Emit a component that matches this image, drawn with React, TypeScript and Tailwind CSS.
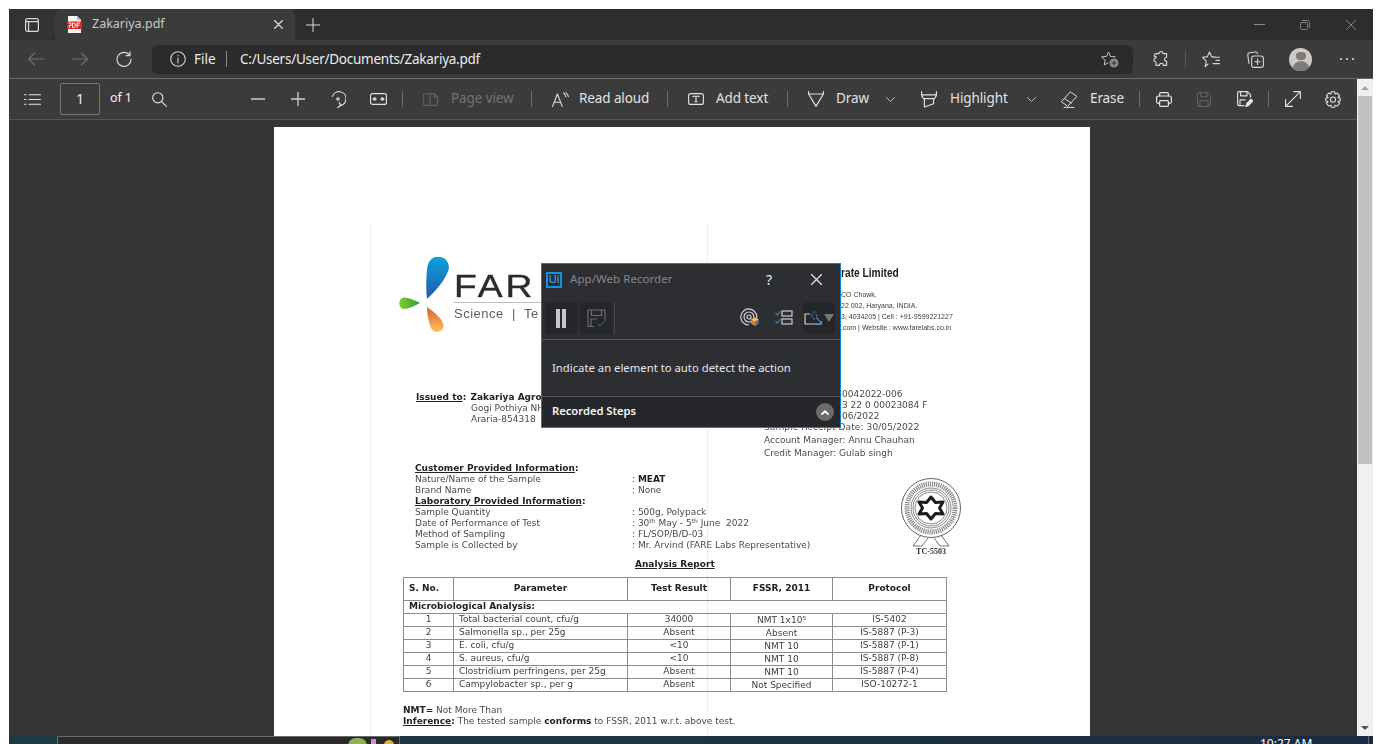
import React from "react";

function I({ w, h, className = "", sw = 1.2, children }: { w: number; h: number; className?: string; sw?: number; children: React.ReactNode }) {
  return (
    <svg width={w} height={h} viewBox={`0 0 ${w} ${h}`} fill="none" stroke="currentColor" strokeWidth={sw} strokeLinecap="round" strokeLinejoin="round" className={`shrink-0 ${className}`}>
      {children}
    </svg>
  );
}

function Sep({ className = "" }: { className?: string }) {
  return <div className={`w-px h-[16px] bg-[#6e6e6e] shrink-0 ${className}`} />;
}

function Chevron({ className = "" }: { className?: string }) {
  return (
    <I w={9} h={5} className={`text-[#bdbdbd] ${className}`} sw={1}>
      <path d="M0.5 0.5L4.5 4.5L8.5 0.5" />
    </I>
  );
}

function TabBar() {
  return (
    <div className="h-[31px] bg-[#2d2d2d] flex items-stretch text-[#d8d8d8]">
      <div className="w-[46px] bg-[#333333] rounded-br-md flex items-center pl-[16px]">
        <I w={14} h={14}>
          <rect x="0.6" y="0.6" width="12.8" height="12.8" rx="2" />
          <path d="M0.6 3.6H13.4M3.6 3.6V13.4" />
        </I>
      </div>
      <div className="w-[240px] bg-[#3b3b3b] rounded-t-md flex items-center">
        <svg width="15" height="17" viewBox="0 0 15 17" className="ml-[12px] shrink-0">
          <path d="M1 0H10L14 4V17H1Z" fill="#f4f4f4" />
          <path d="M10 0V4H14Z" fill="#bbbbbb" />
          <rect x="0" y="5.5" width="15" height="7.5" fill="#e2231a" />
          <path d="M1.5 7H4V9.6H2.3V11.6M5.5 7V11.6H7.2L8.2 10.5V8L7.2 7H5.5ZM10 11.6V7H13M10 9.2H12.4" fill="none" stroke="#fff" strokeWidth="1" />
        </svg>
        <span className="ml-[10px] text-[12.5px] text-[#c8c8c8] w-[182px] whitespace-nowrap">Zakariya.pdf</span>
        <I w={9} h={9} sw={1.3}>
          <path d="M0.5 0.5L8.5 8.5M8.5 0.5L0.5 8.5" />
        </I>
      </div>
      <div className="flex items-center ml-[11px]">
        <I w={14} h={14} sw={1}>
          <path d="M7 0V14M0 7H14" />
        </I>
      </div>
      <div className="flex-1" />
      <div className="flex items-center text-[#8a8a8a]">
        <I w={11} h={1} sw={1}>
          <path d="M0 0.5H11" />
        </I>
        <I w={10} h={10} sw={0.9} className="ml-[35px]">
          <rect x="0.5" y="2.5" width="7" height="7" rx="1.2" />
          <path d="M2.5 0.5H7.5A2 2 0 0 1 9.5 2.5V7.5" />
        </I>
        <I w={10} h={10} sw={0.9} className="ml-[36px] mr-[17px]">
          <path d="M0 0L10 10M10 0L0 10" />
        </I>
      </div>
    </div>
  );
}

function AddressRow() {
  return (
    <div className="h-[39px] bg-[#3b3b3b] border-b border-[#6b6b6b] flex items-center text-[#d6d6d6]">
      <I w={16} h={14} className="ml-[19px] text-[#6f6f6f]" sw={1.1}>
        <path d="M0.6 7H15.6M6.6 1L0.6 7L6.6 13" />
      </I>
      <I w={16} h={14} className="ml-[28px] text-[#6f6f6f]" sw={1.1}>
        <path d="M0.4 7H15.4M9.4 1L15.4 7L9.4 13" />
      </I>
      <I w={16} h={16} className="ml-[28px]" sw={1.2}>
        <path d="M13.6 4.2A7 7 0 1 0 15 8" />
        <path d="M14 0.8V4.7H10.1" />
      </I>
      <div className="ml-[20px] w-[981px] h-[29px] bg-[#2b2b2b] rounded-md flex items-center">
        <I w={16} h={16} className="ml-[18px]" sw={1.1}>
          <circle cx="8" cy="8" r="7.3" />
          <path d="M8 7V12M8 4.3V4.8" />
        </I>
        <span className="ml-[8px] text-[13.5px] text-[#ececec] w-[24px]">File</span>
        <div className="ml-[8px] w-px h-[16px] bg-[#8a8a8a]" />
        <span className="ml-[13px] text-[13.5px] text-[#ececec] whitespace-nowrap tracking-[-0.25px]">C:/Users/User/Documents/Zakariya.pdf</span>
        <div className="flex-1" />
        <svg width="18" height="17" viewBox="0 0 18 17" className="mr-[14px] text-[#c4c4c4]" fill="none" stroke="currentColor" strokeWidth="1" strokeLinejoin="round">
          <path d="M7.5 1L9.5 5.4L14.4 5.9L10.8 9.2L11.8 14L7.5 11.6L3.2 14L4.2 9.2L0.6 5.9L5.5 5.4Z" />
          <circle cx="13" cy="12" r="5" fill="#8c8c8c" stroke="#2b2b2b" />
          <path d="M13 9.6V14.4M10.6 12H15.4" stroke="#2b2b2b" />
        </svg>
      </div>
      <svg width="16" height="16" viewBox="0 0 16 16" className="ml-[20px]" fill="none" stroke="currentColor" strokeWidth="1.15" strokeLinejoin="round">
        <path d="M6 2.6A2 2 0 0 1 10 2.6H13.6V6.2A2 2 0 0 0 13.6 10.2V14.4H10.4A2 2 0 0 0 6.4 14.4H3V11A2 2 0 0 1 3 7V5.6L1.6 5.6A2 2 0 0 1 3 2.6Z" />
      </svg>
      <div className="ml-[16px] w-px h-[16px] bg-[#5c5c5c]" />
      <I w={18} h={17} className="ml-[16px]" sw={1.1}>
        <path d="M7.5 1L9.6 5.6L14.6 6.2M14 9.4H17.4M11 12.6H17.4M11 6.2H17.4M6 13L3.2 15.6L4.2 10.2L0.6 6.4L5.4 5.6L7.5 1" />
      </I>
      <I w={17} h={17} className="ml-[27px]" sw={1.1}>
        <path d="M2 12.5L0.8 4.2A2 2 0 0 1 2.6 1.8L8.4 1A2 2 0 0 1 10.6 2.6" />
        <rect x="4.6" y="5" width="11.8" height="11.4" rx="2.4" />
        <path d="M10.5 8V13.4M7.8 10.7H13.2" />
      </I>
      <div className="ml-[25px] w-[23px] h-[23px] rounded-full bg-[#cfcac6] overflow-hidden flex flex-col items-center">
        <div className="w-[10px] h-[10px] mt-[4px] rounded-full bg-[#7f7b78]" />
        <div className="w-[18px] h-[12px] mt-[1px] rounded-t-full bg-[#7f7b78]" />
      </div>
      <div className="ml-[28px] flex gap-[3px]">
        <div className="w-[2px] h-[2px] rounded-full bg-[#e4e4e4]" />
        <div className="w-[2px] h-[2px] rounded-full bg-[#e4e4e4] ml-[1px]" />
        <div className="w-[2px] h-[2px] rounded-full bg-[#e4e4e4] ml-[1px]" />
      </div>
    </div>
  );
}

function PdfToolbar() {
  const t = "mb-[1px]";
  return (
    <div className="h-[41px] bg-[#3b3b3b] border-b border-[#555555] flex items-center text-[#e2e2e2] text-[13.5px] tracking-[-0.1px] whitespace-nowrap">
      <I w={17} h={11} className="ml-[15px]" sw={1.1}>
        <path d="M0.5 0.8H2M5 0.8H16.5M0.5 5.5H2M5 5.5H16.5M0.5 10.2H2M5 10.2H16.5" />
      </I>
      <div className="ml-[19px] w-[40px] h-[32px] border border-[#767676] rounded-[2px] flex items-center justify-center text-[#f0f0f0]">1</div>
      <span className={`ml-[10px] w-[21px] text-[#f0f0f0] text-[12.5px] ${t}`}>of 1</span>
      <I w={15} h={15} className="ml-[21px]" sw={1.1}>
        <circle cx="5.8" cy="5.8" r="5.1" />
        <path d="M9.6 9.6L14.4 14.4" />
      </I>
      <I w={14} h={2} className="ml-[84px] text-[#cfcfcf]" sw={1.3}>
        <path d="M0 1H14" />
      </I>
      <I w={14} h={14} className="ml-[26px] text-[#cfcfcf]" sw={1.3}>
        <path d="M7 0V14M0 7H14" />
      </I>
      <I w={16} h={17} className="ml-[25px]" sw={1.15}>
        <path d="M2.4 5.4A7 7 0 1 1 10 14.6" />
        <path d="M7.6 16.4L10.8 14.6L9.2 11.6" />
        <circle cx="8" cy="8" r="1.2" />
      </I>
      <I w={17} h={12} className="ml-[24px]" sw={1.15}>
        <rect x="0.6" y="0.6" width="15.8" height="10.8" rx="2" />
        <path d="M3.5 6H6.5M10.5 6H13.5" />
        <path d="M3 6L5 4.6V7.4ZM14 6L12 4.6V7.4Z" fill="currentColor" />
      </I>
      <Sep className="ml-[15px]" />
      <I w={15} h={13} className="ml-[20px] text-[#646464]" sw={1.1}>
        <path d="M5 0.6H2A1.4 1.4 0 0 0 0.6 2V11A1.4 1.4 0 0 0 2 12.4H5" strokeDasharray="2 1.4" />
        <path d="M7 0.6H11L14.4 4V11A1.4 1.4 0 0 1 13 12.4H7ZM11 0.6V4H14.4" />
      </I>
      <span className={`ml-[13px] w-[61px] text-[#727272] ${t}`}>Page view</span>
      <Sep className="ml-[19px]" />
      <I w={17} h={15} className="ml-[20px]" sw={1.1}>
        <path d="M0.6 14.4L5.4 2L10.2 14.4M2.2 10.2H8.6" />
        <path d="M11.4 1C12.8 1.8 13.6 3 13.8 4.6M13.8 0.6C15.4 1.6 16.2 3 16.4 4.8" />
      </I>
      <span className={`ml-[10px] w-[70px] ${t}`}>Read aloud</span>
      <Sep className="ml-[18px]" />
      <I w={16} h={12} className="ml-[20px]" sw={1.1}>
        <rect x="0.6" y="0.6" width="14.8" height="10.8" rx="2" />
        <path d="M5 3.6V3.2H11V3.6M8 3.2V8.8M6.8 8.8H9.2" />
      </I>
      <span className={`ml-[12px] w-[53px] ${t}`}>Add text</span>
      <Sep className="ml-[18px]" />
      <I w={16} h={17} className="ml-[20px]" sw={1.15}>
        <path d="M0.6 0.6V3M15.4 0.6V3M0.6 3H15.4L8 15.4Z" />
      </I>
      <span className={`ml-[12px] w-[32px] ${t}`}>Draw</span>
      <Chevron className="ml-[18px]" />
      <I w={16} h={17} className="ml-[26px]" sw={1.15}>
        <path d="M0.6 0.6V4.6L2.6 7.6H13.4L15.4 4.6V0.6M0.6 3.8H15.4M3.4 7.6V16L12.6 12.8V7.6" />
      </I>
      <span className={`ml-[13px] w-[57px] ${t}`}>Highlight</span>
      <Chevron className="ml-[20px]" />
      <I w={17} h={17} className="ml-[25px]" sw={1}>
        <path d="M0.6 10.4L9.4 0.8L15.8 5.4L7 15Z" />
        <path d="M3.4 7.4L10.2 12.2" />
        <path d="M3 16.4H13" />
      </I>
      <span className={`ml-[12px] w-[31px] ${t}`}>Erase</span>
      <Sep className="ml-[18px]" />
      <I w={16} h={15} className="ml-[16px]" sw={1.2}>
        <path d="M3.6 4V2A1.4 1.4 0 0 1 5 0.6H11A1.4 1.4 0 0 1 12.4 2V4" />
        <path d="M3.6 11.4H2.4A1.8 1.8 0 0 1 0.6 9.6V5.8A1.8 1.8 0 0 1 2.4 4H13.6A1.8 1.8 0 0 1 15.4 5.8V9.6A1.8 1.8 0 0 1 13.6 11.4H12.4" />
        <rect x="3.6" y="8.6" width="8.8" height="5.8" rx="1.2" />
      </I>
      <I w={14} h={15} className="ml-[25px] text-[#676767]" sw={1}>
        <path d="M0.6 2A1.4 1.4 0 0 1 2 0.6H10.4L13.4 3.6V13A1.4 1.4 0 0 1 12 14.4H2A1.4 1.4 0 0 1 0.6 13Z" />
        <path d="M3.6 0.6V4.8H10V0.6M3 14.4V8.8H11V14.4" />
      </I>
      <svg width="16" height="16" viewBox="0 0 16 16" className="ml-[26px]" fill="none" stroke="currentColor" strokeWidth="1.15" strokeLinejoin="round">
        <path d="M7.6 14.6H2A1.4 1.4 0 0 1 0.6 13.2V2A1.4 1.4 0 0 1 2 0.6H10.4L13.4 3.6V6.4" />
        <path d="M3.6 0.6V4.8H10V0.6M3 14.4V8.8H8.6" />
        <path d="M9 15.6L9.8 12.4L14 8.2L15.8 10L11.6 14.4Z" fill="currentColor" />
      </svg>
      <Sep className="ml-[15px]" />
      <I w={16} h={16} className="ml-[16px]" sw={1.1}>
        <path d="M0.6 15.4L15.4 0.6M8.6 0.6H15.4V7.4M0.6 8.6V15.4H7.4" />
      </I>
      <svg width="16" height="17" viewBox="0 0 16 17" className="ml-[24px]" fill="none" stroke="currentColor" strokeWidth="1.1" strokeLinejoin="round">
        <path d="M6.4 0.8H9.6L10.1 3L12.3 2.1L14.6 4.9L12.9 6.6L15.2 7.2V10L13 10.6L14.6 12.3L12.3 15L10.1 14.2L9.6 16.2H6.4L5.9 14.2L3.7 15L1.4 12.3L3 10.6L0.8 10V7.2L3.1 6.6L1.4 4.9L3.7 2.1L5.9 3Z" />
        <circle cx="8" cy="8.6" r="2.6" />
      </svg>
    </div>
  );
}

function Scrollbar() {
  return (
    <div className="w-[16px] bg-[#f0f0f0] flex flex-col items-center">
      <div className="h-[17px] flex items-center justify-center">
        <div className="w-0 h-0 border-x-[4px] border-x-transparent border-b-[4px] border-b-[#a3a3a3]" />
      </div>
      <div className="w-[14px] h-[368px] bg-[#c1c1c1]" />
      <div className="flex-1" />
      <div className="h-[17px] flex items-center justify-center">
        <div className="w-0 h-0 border-x-[4px] border-x-transparent border-t-[4px] border-t-[#505050]" />
      </div>
    </div>
  );
}

function Logo() {
  return (
    <svg width="52" height="76" viewBox="0 0 52 76" className="shrink-0">
      <defs>
        <linearGradient id="lb" x1="0" y1="0" x2="0" y2="1">
          <stop offset="0" stopColor="#07a5dc" />
          <stop offset="1" stopColor="#2a55a8" />
        </linearGradient>
        <linearGradient id="lg" x1="0" y1="0" x2="1" y2="0">
          <stop offset="0" stopColor="#7fd12f" />
          <stop offset="1" stopColor="#2f9a3c" />
        </linearGradient>
        <linearGradient id="lo" x1="0" y1="0" x2="0" y2="1">
          <stop offset="0" stopColor="#d9602c" />
          <stop offset="1" stopColor="#fcc45a" />
        </linearGradient>
      </defs>
      <path d="M29 42C27.5 30 28.5 16 29.5 9A10.8 10.8 0 0 1 51 10C50 20 37 35 29 42Z" fill="url(#lb)" />
      <path d="M22 46C17 48.5 11 52 5.5 52A6 6 0 0 1 5.5 40.5C11 40.5 17 43.5 22 46Z" fill="url(#lg)" />
      <path d="M29 50C36 55 45 62 45.5 68.5A6.5 6.5 0 0 1 33 71C30 64 29 56 29 50Z" fill="url(#lo)" />
    </svg>
  );
}

function Seal() {
  return (
    <div className="ml-[485px] mt-[15px] w-[62px] shrink-0 flex flex-col items-center">
      <svg width="62" height="69" viewBox="0 0 62 69" fill="none" stroke="#3a3a3a" className="shrink-0">
        <path d="M21 57L13 68H22L28 60M41 57L49 68H40L34 60" strokeWidth="0.7" />
        <circle cx="31" cy="30" r="29.5" strokeWidth="0.8" fill="#fff" />
        <circle cx="31" cy="30" r="24" strokeWidth="5" strokeDasharray="1.2 0.9" stroke="#8a8a8a" />
        <circle cx="31" cy="30" r="20" strokeWidth="0.6" />
        <circle cx="31" cy="30" r="18" strokeWidth="0.6" />
        <circle cx="31" cy="30" r="16" strokeWidth="0.6" />
        <path d="M31 19L35.5 24.5L43 24L39.5 30L43 36L35.5 35.5L31 41L26.5 35.5L19 36L22.5 30L19 24L26.5 24.5Z" stroke="#1c1c1c" strokeWidth="3" strokeLinejoin="round" />
      </svg>
      <span className="font-['Liberation_Serif',serif] font-bold text-[8px] leading-[9px] text-[#333] whitespace-nowrap">TC-5503</span>
    </div>
  );
}

const rows = [
  ["1", "Total bacterial count, cfu/g", "34000", "NMT 1x10⁵", "IS-5402"],
  ["2", "Salmonella sp., per 25g", "Absent", "Absent", "IS-5887 (P-3)"],
  ["3", "E. coli, cfu/g", "<10", "NMT 10", "IS-5887 (P-1)"],
  ["4", "S. aureus, cfu/g", "<10", "NMT 10", "IS-5887 (P-8)"],
  ["5", "Clostridium perfringens, per 25g", "Absent", "NMT 10", "IS-5887 (P-4)"],
  ["6", "Campylobacter sp., per g", "Absent", "Not Specified", "ISO-10272-1"],
];

function ReportTable() {
  const cell = "border border-[#8c8c8c] p-0 pb-px";
  const low = "border border-[#8c8c8c] p-0 pt-px";
  return (
    <table className="ml-[129px] mt-[7px] w-[543px] table-fixed border-collapse text-[#3f3f3f] leading-[11px]">
      <colgroup>
        <col className="w-[50px]" />
        <col className="w-[174px]" />
        <col className="w-[103px]" />
        <col className="w-[102px]" />
        <col className="w-[114px]" />
      </colgroup>
      <tbody>
        <tr className="h-[23px] font-bold text-center text-[#222]">
          <td className={`${cell} text-left pl-[5px]`}>S. No.</td>
          <td className={cell}>Parameter</td>
          <td className={cell}>Test Result</td>
          <td className={cell}>FSSR, 2011</td>
          <td className={cell}>Protocol</td>
        </tr>
        <tr className="h-[13px] font-bold text-[#222]">
          <td colSpan={5} className={`${cell} pl-[5px]`}>Microbiological Analysis:</td>
        </tr>
        {rows.map((r) => (
          <tr key={r[0]} className="h-[13px] text-center">
            <td className={cell}>{r[0]}</td>
            <td className={`${cell} text-left pl-[5px]`}>{r[1]}</td>
            <td className={cell}>{r[2]}</td>
            <td className={low}>{r[3]}</td>
            <td className={cell}>{r[4]}</td>
          </tr>
        ))}
      </tbody>
    </table>
  );
}

function Page() {
  const li = "h-[11px] leading-[11px]";
  return (
    <div className="relative ml-[265px] mt-[7px] w-[816px] h-[650px] bg-white overflow-hidden font-['DejaVu_Sans',sans-serif] text-[9px] text-[#4a4a4a] blur-[0.25px]">
      <div className="absolute left-[96px] top-[95px] bottom-0 w-px bg-[#f3f3f3] mix-blend-multiply" />
      <div className="absolute left-[433px] top-[95px] bottom-0 w-px bg-[#fbeaea] mix-blend-multiply" />

      <div className="pt-[130px] pl-[124px] flex h-[265px]">
        <div className="w-[443px] flex items-start">
          <Logo />
          <div className="ml-[4px] w-[87px] overflow-hidden whitespace-nowrap font-['Liberation_Sans',sans-serif]">
            <div className="mt-[13px] text-[31px] leading-[34px] text-[#2b2b2b] border-b border-[#bdbdbd] h-[33px]">
              <span className="inline-block origin-left scale-x-[1.2] tracking-[2.5px] [-webkit-text-stroke:0.4px_#2b2b2b]">FAR</span>
            </div>
            <div className="mt-[2px] text-[13px] leading-[18px] text-[#5e5e5e] tracking-[0.5px]">Science&nbsp; | &nbsp;Te</div>
          </div>
        </div>
        <div className="font-['Liberation_Sans',sans-serif] mt-[9px] whitespace-nowrap text-[#3c3c3c]">
          <div className="text-[12px] leading-[14px] font-bold text-[#222] origin-left scale-x-[0.85]">rate Limited</div>
          <div className="mt-[9px] text-[7px] leading-[11px]">CO Chowk,</div>
          <div className="text-[7px] leading-[11px]">22 002, Haryana, INDIA.</div>
          <div className="text-[7px] leading-[11px]">3, 4034205 | Cell : +91-9599221227</div>
          <div className="text-[7px] leading-[11px]">.com | Website : www.farelabs.co.in</div>
        </div>
      </div>

      <div className="pl-[142px] flex h-[71px]">
        <div className="w-[348px]">
          <div className={li}>
            <b className="text-[#222]"><u>Issued to</u>: <span className="ml-px">Zakariya Agro</span></b>
          </div>
          <div className={`${li} pl-[55px]`}>Gogi Pothiya NH</div>
          <div className={`${li} pl-[55px]`}>Araria-854318</div>
        </div>
        <div className="-mt-[3px] whitespace-nowrap">
          <div className={`${li} pl-[78px]`}>0042022-006</div>
          <div className={`${li} pl-[78px]`}>3 22 0 00023084 F</div>
          <div className={`${li} pl-[78px]`}>06/2022</div>
          <div className={`${li} tracking-[0.1px]`}>Sample Receipt Date: 30/05/2022</div>
          <div className="h-[12px] leading-[12px] mt-[1px]">Account Manager: Annu Chauhan</div>
          <div className="h-[12px] leading-[12px] mt-[1px]">Credit Manager: Gulab singh</div>
        </div>
      </div>

      <div className="pl-[141px] flex h-[96px]">
        <div className="w-0">
          <div className="w-[450px]">
            <div className={`${li} font-bold text-[#222]`}><u>Customer Provided Information</u>:</div>
            <div className={`${li} flex`}><span className="w-[217px]">Nature/Name of the Sample</span><span>: <b className="text-[#222]">MEAT</b></span></div>
            <div className={`${li} flex`}><span className="w-[217px]">Brand Name</span><span>: None</span></div>
            <div className={`${li} font-bold text-[#222]`}><u>Laboratory Provided Information</u>:</div>
            <div className={`${li} flex`}><span className="w-[217px]">Sample Quantity</span><span>: 500g, Polypack</span></div>
            <div className={`${li} flex`}><span className="w-[217px]">Date of Performance of Test</span><span>: 30<sup className="text-[6px] leading-none">th</sup> May - 5<sup className="text-[6px] leading-none">th</sup> June&nbsp; 2022</span></div>
            <div className={`${li} flex`}><span className="w-[217px]">Method of Sampling</span><span>: FL/SOP/B/D-03</span></div>
            <div className={`${li} flex`}><span className="w-[217px]">Sample is Collected by</span><span>: Mr. Arvind (FARE Labs Representative)</span></div>
          </div>
        </div>
        <Seal />
      </div>

      <div className="ml-[361px] h-[11px] leading-[11px] font-bold text-[#222]"><u>Analysis Report</u></div>
      <ReportTable />

      <div className="pl-[129px] mt-[13px] whitespace-nowrap">
        <div className={li}><b className="text-[#222]">NMT=</b> Not More Than</div>
        <div className={li}><b className="text-[#222]"><u>Inference</u>:</b> The tested sample <b className="text-[#222]">conforms</b> to FSSR, 2011 w.r.t. above test.</div>
      </div>
    </div>
  );
}

function Recorder() {
  return (
    <div className="absolute left-[541px] top-[263px] w-[300px] h-[165px] bg-[#2d2e32] border border-[#1481d0] flex flex-col text-[#ececec]">
      <div className="h-[31px] flex items-center">
        <div className="ml-[4px] w-[16px] h-[16px] border-2 border-[#1a8fe0] bg-[#1d3147] flex items-center justify-center text-[11px] leading-none text-[#4fa9e8] font-['Liberation_Sans',sans-serif]">Ui</div>
        <span className="ml-[8px] text-[11.6px] text-[#868686] w-[196px] whitespace-nowrap mb-[1px]">App/Web Recorder</span>
        <span className="text-[14px] text-[#f0f0f0] w-[12px]">?</span>
        <I w={11} h={11} className="ml-[33px] text-[#f0f0f0]" sw={1.1}>
          <path d="M0.5 0.5L10.5 10.5M10.5 0.5L0.5 10.5" />
        </I>
      </div>
      <div className="h-[45px] border-b border-[#555659] flex items-start pt-[7px]">
        <div className="ml-[3px] w-[32px] h-[32px] rounded bg-[#25262a] flex items-center justify-center gap-[2px]">
          <div className="w-[4px] h-[19px] bg-[#c8c8c8]" />
          <div className="w-[4px] h-[19px] bg-[#c8c8c8]" />
        </div>
        <div className="ml-[3px] w-[32px] h-[32px] rounded bg-[#25262a] flex items-center justify-center">
          <svg width="19" height="19" viewBox="0 0 19 19" fill="none" stroke="#6c6c6c" strokeWidth="1.2">
            <path d="M7 17.5H1V1H18V12" />
            <path d="M4.5 1V6.5H14.5V1M4 17V10H10" />
            <path d="M11 15L13 17L17.5 12.5" stroke="#25527e" />
          </svg>
        </div>
        <div className="ml-[2px] mt-[1px] w-px h-[31px] bg-[#46474a]" />
        <svg width="19" height="19" viewBox="0 0 19 19" fill="none" stroke="#d6d6d6" strokeWidth="1.2" className="ml-[125px] mt-[6px] shrink-0">
          <path d="M16 12.5A8 8 0 1 0 9 17" />
          <circle cx="9" cy="9" r="5" />
          <circle cx="9" cy="9" r="2" />
          <path d="M11 11.5L15 9.5L18.5 11.5V15.5L15 18L11 15.5Z" fill="#d9822b" stroke="none" />
          <path d="M15 13.5L18.5 11.5V15.5L15 18Z" fill="#2f7fd0" stroke="none" />
          <path d="M11 11.5L15 9.5L18.5 11.5L15 13.5Z" fill="#f2c84b" stroke="none" />
        </svg>
        <svg width="18" height="15" viewBox="0 0 18 15" fill="none" className="ml-[16px] mt-[8px] shrink-0">
          <rect x="7" y="1" width="10" height="5" stroke="#cfcfcf" strokeWidth="1.2" />
          <rect x="7" y="9" width="10" height="5" stroke="#cfcfcf" strokeWidth="1.2" />
          <path d="M0.5 3L2.5 5L5.5 1M0.5 11L2.5 13L5.5 9" stroke="#2a83d8" strokeWidth="1.2" />
        </svg>
        <div className="ml-[10px] w-[32px] h-[32px] rounded bg-[#25262a] flex items-center">
          <svg width="19" height="17" viewBox="0 0 19 17" fill="none" className="shrink-0 ml-[1px]">
            <path d="M6 4H1V14H17V11" stroke="#cfcfcf" strokeWidth="1.2" />
            <path d="M12 7L18 14" stroke="#2a83d8" strokeWidth="1.3" />
            <path d="M10 1V3M10 8V10M6.5 5.5H8.5M12 5.5H14M7.5 3L9 4.5M12.5 3L11 4.5M7.5 8L9 6.5" stroke="#2a83d8" strokeWidth="1" />
          </svg>
          <div className="ml-[1px] w-0 h-0 border-x-[5px] border-x-transparent border-t-[8px] border-t-[#77787a]" />
        </div>
      </div>
      <div className="h-[56px] flex items-center pl-[10px] text-[11.3px] text-[#e8e8e8] whitespace-nowrap">
        Indicate an element to auto detect the action
      </div>
      <div className="flex-1 bg-[#26272b] border-t border-[#555659] flex items-center">
        <span className="ml-[10px] text-[11.2px] font-semibold text-[#f6f6f6] w-[264px] whitespace-nowrap mb-[1px]">Recorded Steps</span>
        <div className="w-[18px] h-[18px] rounded-full bg-[#6b6b6b] flex items-center justify-center">
          <I w={8} h={5} sw={1.8} className="text-white">
            <path d="M1 4.2L4 1.2L7 4.2" />
          </I>
        </div>
      </div>
    </div>
  );
}

function Taskbar() {
  return (
    <div className="h-[8px] mx-[9px] overflow-hidden bg-linear-to-r from-[#1c3c45] via-[#1d3540] to-[#1b2a40] flex items-start">
      <div className="ml-[48px] w-[343px] h-[8px] bg-[#2a2a2a] border border-[#6a6a6a] border-b-0 flex justify-end gap-[4px] pr-[5px]">
        <div className="w-[19px] h-[8px] rounded-t-full bg-[#8fae5a] mt-[1px]" />
        <div className="w-[5px] h-[8px] bg-[#d98ad8] mt-[2px]" />
        <div className="w-[10px] h-[8px] rounded-t-full bg-[#e0b23c] mt-[3px] ml-[4px]" />
      </div>
      <span className="ml-[860px] mt-[1px] text-[12px] leading-[14px] text-white whitespace-nowrap w-[50px]">10:27 AM</span>
      <div className="ml-[58px] w-px h-[8px] bg-[#5d6b7d]" />
    </div>
  );
}

export default function App() {
  return (
    <div className="relative w-[1382px] h-[744px] bg-white overflow-hidden flex flex-col pt-[9px] font-['Noto_Sans',sans-serif]">
      <div className="mx-[9px] h-[727px] flex flex-col">
        <TabBar />
        <AddressRow />
        <div className="flex-1 flex min-h-0">
          <div className="flex-1 min-w-0 flex flex-col">
            <PdfToolbar />
            <div className="flex-1 min-h-0 bg-[#363636] overflow-hidden">
              <Page />
            </div>
          </div>
          <Scrollbar />
        </div>
      </div>
      <Taskbar />
      <Recorder />
    </div>
  );
}
